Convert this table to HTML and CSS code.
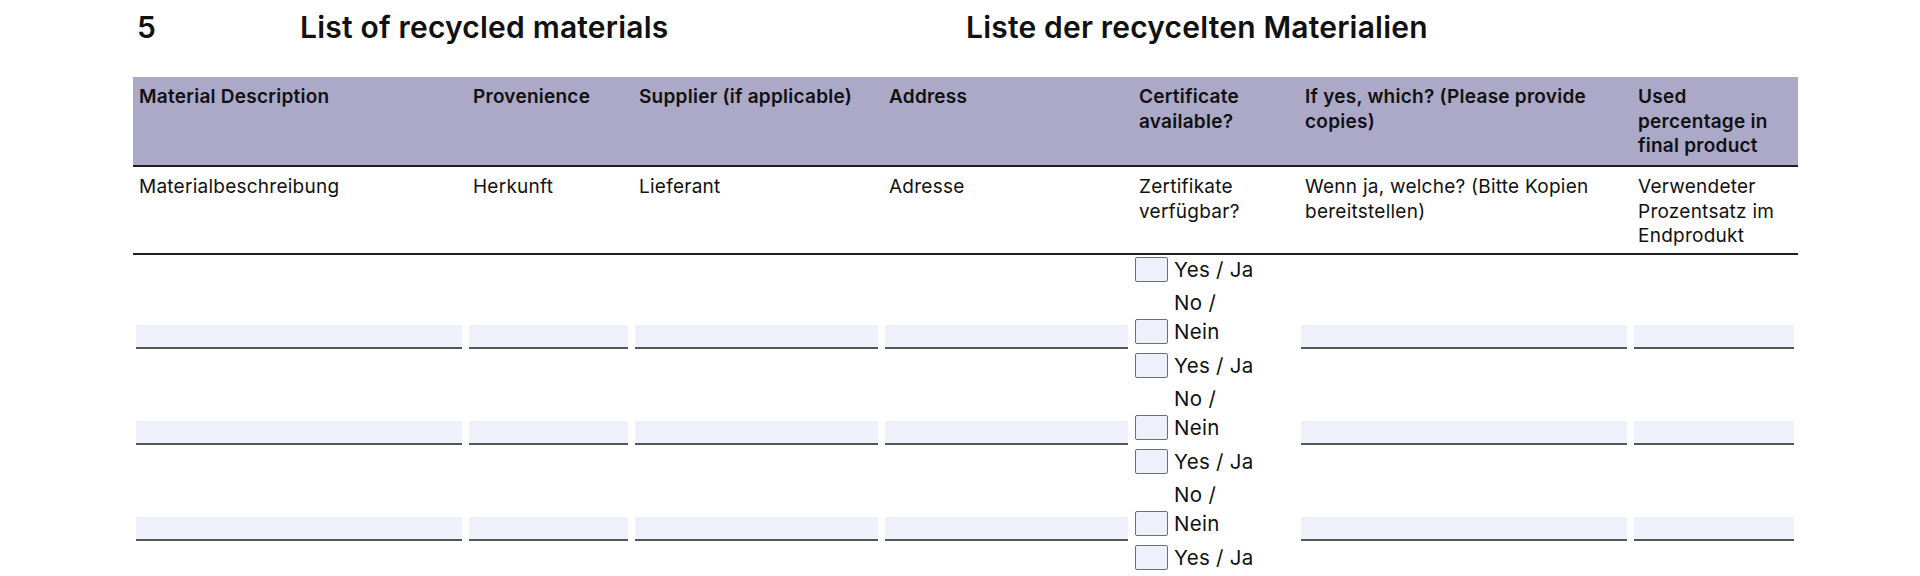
FILE: index.html
```html
<!DOCTYPE html>
<html lang="en">
<head>
<meta charset="utf-8">
<title>List of recycled materials</title>
<link rel="stylesheet" href="styles.css">
</head>
<body>
<div class="page">
  <div class="title">
    <span>5</span>
    <span>List of recycled materials</span>
    <span>Liste der recycelten Materialien</span>
  </div>
  <div class="table">
    <div class="row head1">
      <div class="cell">Material Description</div>
      <div class="cell">Provenience</div>
      <div class="cell">Supplier (if applicable)</div>
      <div class="cell">Address</div>
      <div class="cell">Certificate available?</div>
      <div class="cell">If yes, which? (Please provide copies)</div>
      <div class="cell">Used percentage in final product</div>
    </div>
    <div class="row head2">
      <div class="cell">Materialbeschreibung</div>
      <div class="cell">Herkunft</div>
      <div class="cell">Lieferant</div>
      <div class="cell">Adresse</div>
      <div class="cell">Zertifikate verfügbar?</div>
      <div class="cell">Wenn ja, welche? (Bitte Kopien bereitstellen)</div>
      <div class="cell">Verwendeter Prozentsatz im Endprodukt</div>
    </div>

    <div class="row data">
      <div class="field"></div><div class="field"></div><div class="field"></div><div class="field"></div>
      <div class="checks">
        <div class="opt"><span class="box"></span><span class="lbl">Yes / Ja</span></div>
        <div class="opt no"><span class="box"></span><span class="lbl">No /<br>Nein</span></div>
      </div>
      <div class="field"></div><div class="field"></div>
    </div>
    <div class="row data">
      <div class="field"></div><div class="field"></div><div class="field"></div><div class="field"></div>
      <div class="checks">
        <div class="opt"><span class="box"></span><span class="lbl">Yes / Ja</span></div>
        <div class="opt no"><span class="box"></span><span class="lbl">No /<br>Nein</span></div>
      </div>
      <div class="field"></div><div class="field"></div>
    </div>
    <div class="row data">
      <div class="field"></div><div class="field"></div><div class="field"></div><div class="field"></div>
      <div class="checks">
        <div class="opt"><span class="box"></span><span class="lbl">Yes / Ja</span></div>
        <div class="opt no"><span class="box"></span><span class="lbl">No /<br>Nein</span></div>
      </div>
      <div class="field"></div><div class="field"></div>
    </div>
    <div class="row last">
      <div class="spacer"></div>
      <div class="checks">
        <div class="opt"><span class="box"></span><span class="lbl">Yes / Ja</span></div>
      </div>
    </div>
  </div>
</div>
</body>
</html>
```

FILE: styles.css
```css
html, body {
  margin: 0;
  padding: 0;
  background: #ffffff;
}

body {
  font-family: Inter, "Noto Sans", sans-serif;
  color: #111111;
  width: 1920px;
}

.page {
  padding-top: 10px;
}

.title {
  display: grid;
  grid-template-columns: 163px 666px auto;
  padding-left: 137px;
  font-size: 30px;
  font-weight: 600;
  line-height: 34px;
  height: 34px;
  letter-spacing: 0.2px;
}

.table {
  margin-top: 33px;
  margin-left: 133px;
  width: 1665px;
}

.row {
  display: grid;
  grid-template-columns: 333px 166px 250px 250px 166px 333px 167px;
}

.cell {
  padding: 8px 8px 0 6px;
  line-height: 24.5px;
  font-size: 19px;
  letter-spacing: 0.25px;
}

.head1 {
  background: #aba8c8;
  height: 88px;
  border-bottom: 2px solid #1e1e22;
  font-weight: 600;
}

.head2 {
  height: 86px;
  border-bottom: 2px solid #1e1e22;
}

.head1 .cell:not(:first-child),
.head2 .cell:not(:first-child) {
  padding-left: 7px;
}

.data {
  height: 96px;
}

.field {
  align-self: end;
  height: 22px;
  margin: 0 4px 2px 3px;
  background: #eef0fc;
  border-bottom: 2px solid #555555;
}

.last .spacer {
  grid-column: 1 / 5;
}

.checks {
  display: flex;
  flex-direction: column;
  padding-left: 3px;
}

.opt {
  display: flex;
  align-items: flex-end;
  gap: 6px;
  font-size: 20.5px;
  line-height: 29px;
  letter-spacing: 0.3px;
}

.opt.no {
  margin-top: 4px;
}

.box {
  flex: none;
  width: 31px;
  height: 23px;
  margin-bottom: 2px;
  background: #eef0fb;
  border: 1.5px solid #6e6e6e;
  border-radius: 2px;
}

.lbl {
  display: block;
}
```
